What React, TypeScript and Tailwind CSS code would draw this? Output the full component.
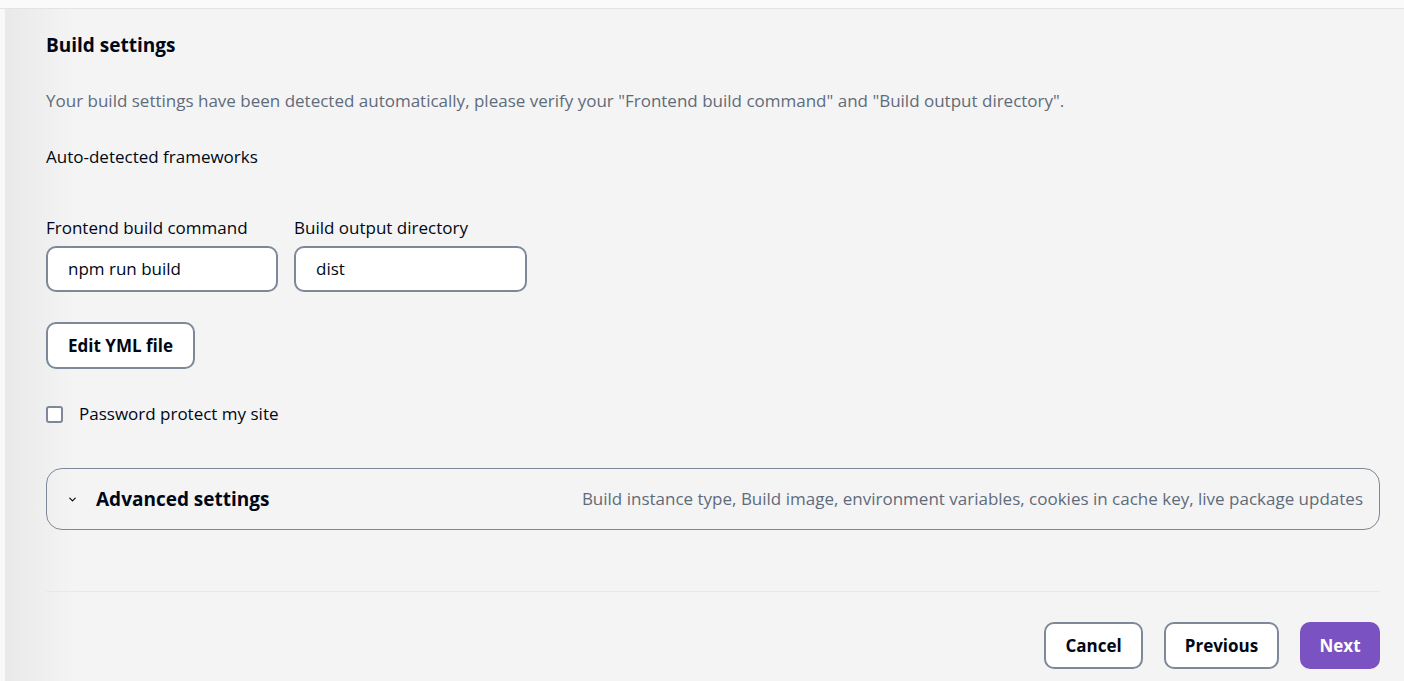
import { ChevronDown } from "lucide-react";

const App = () => {
  return (
    <div className="min-h-screen w-full bg-[#f4f4f4] font-['Open_Sans',sans-serif] text-[#000716] flex flex-col">
      {/* top strip */}
      <div className="h-[9px] bg-[#fafafa] border-b border-[#e3e3e6]"></div>
      <div className="flex flex-1">
        {/* left rail shadow */}
        <div className="w-[5px] bg-[#f8f8f8]"></div>
        <div className="flex-1 bg-gradient-to-r from-[#e9e9e9] via-[#f4f4f4] via-[5%] to-[#f4f4f4] pl-[41px] pr-[24px]">
          <h2 className="mt-[24px] text-[19px] font-bold leading-[24px]">Build settings</h2>
          <p className="mt-[33px] text-[17px] leading-[22px] text-[#5f6b7a]">
            Your build settings have been detected automatically, please verify your "Frontend build command" and "Build output directory".
          </p>
          <p className="mt-[34px] text-[17px] leading-[22px]">Auto-detected frameworks</p>

          <div className="mt-[49px] flex gap-[16px]">
            <div className="flex flex-col">
              <label className="text-[17px] leading-[22px]">Frontend build command</label>
              <div className="mt-[7px] w-[232px] h-[46px] rounded-[10px] border-2 border-[#7d8998] bg-white flex items-center pl-[20px] text-[17px]">
                npm run build
              </div>
            </div>
            <div className="flex flex-col">
              <label className="text-[17px] leading-[22px]">Build output directory</label>
              <div className="mt-[7px] w-[233px] h-[46px] rounded-[10px] border-2 border-[#7d8998] bg-white flex items-center pl-[20px] text-[17px]">
                dist
              </div>
            </div>
          </div>

          <button className="mt-[30px] h-[47px] w-[149px] rounded-[10px] border-2 border-[#7d8998] bg-white text-[17px] font-bold">
            Edit YML file
          </button>

          <label className="mt-[34px] flex items-center gap-[16px] text-[17px] leading-[22px]">
            <span className="w-[17px] h-[17px] rounded-[3px] border-2 border-[#7d8998] bg-white"></span>
            Password protect my site
          </label>

          <div className="mt-[43px] h-[62px] rounded-[16px] border border-[#7d8998] flex items-center pl-[20px] pr-[16px]">
            <ChevronDown className="w-[11px] h-[11px] text-[#000716]" strokeWidth={2.5} />
            <span className="ml-[18px] text-[19px] font-bold">Advanced settings</span>
            <span className="ml-auto text-[17px] text-[#5f6b7a]">
              Build instance type, Build image, environment variables, cookies in cache key, live package updates
            </span>
          </div>

          <div className="mt-[61px] border-t border-[#e6e8ea]"></div>

          <div className="mt-[30px] flex justify-end gap-[21px]">
            <button className="h-[47px] w-[99px] rounded-[10px] border-2 border-[#7d8998] bg-white text-[17px] font-bold">
              Cancel
            </button>
            <button className="h-[47px] w-[115px] rounded-[10px] border-2 border-[#7d8998] bg-white text-[17px] font-bold">
              Previous
            </button>
            <button className="h-[47px] w-[80px] rounded-[10px] bg-[#7a52c2] text-white text-[17px] font-bold">
              Next
            </button>
          </div>
        </div>
      </div>
    </div>
  );
};

export default App;
